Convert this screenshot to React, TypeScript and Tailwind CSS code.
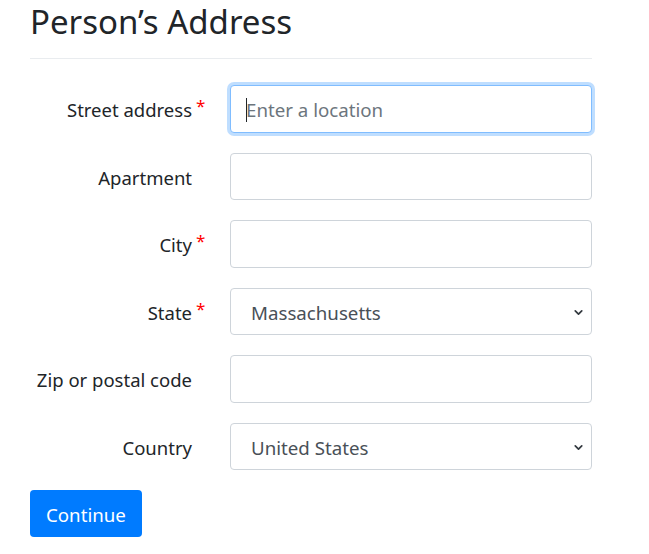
import { ChevronDown } from 'lucide-react';

const font = { fontFamily: "'Noto Sans', 'Open Sans', sans-serif" };

type Field = {
  label: string;
  required?: boolean;
  kind: 'input' | 'select';
  value?: string;
  placeholder?: string;
  focused?: boolean;
};

const fields: Field[] = [
  { label: 'Street address', required: true, kind: 'input', placeholder: 'Enter a location', focused: true },
  { label: 'Apartment', kind: 'input' },
  { label: 'City', required: true, kind: 'input' },
  { label: 'State', required: true, kind: 'select', value: 'Massachusetts' },
  { label: 'Zip or postal code', kind: 'input' },
  { label: 'Country', kind: 'select', value: 'United States' },
];

function Control({ field }: { field: Field }) {
  if (field.kind === 'select') {
    return (
      <div className="relative h-[47.5px] rounded-[4px] border border-[#ced4da] bg-white">
        <div className="flex h-full items-center pl-[20px] pt-[3px] text-[18.7px] text-[#495057]">{field.value}</div>
        <ChevronDown size={13} strokeWidth={3.2} className="absolute right-[6px] top-[17px] text-[#343a40]" />
      </div>
    );
  }
  if (field.focused) {
    return (
      <div className="relative h-[47.5px] rounded-[4px] border border-[#80bdff] bg-white shadow-[0_0_0_3px_rgba(0,123,255,0.25)]">
        <div className="flex h-full items-center pl-[15px] pt-[3px] text-[18.7px] text-[#6c757d]">{field.placeholder}</div>
        <span className="absolute left-[15px] top-[12px] h-[24px] w-px bg-[#212529]" />
      </div>
    );
  }
  return <div className="h-[47.5px] rounded-[4px] border border-[#ced4da] bg-white" />;
}

export default function App() {
  return (
    <div className="min-h-screen bg-white text-[#212529]" style={font}>
      <div className="w-[592px] pl-[30px]">
        <h1 className="pt-[1px] text-[33px] leading-[42px] font-normal">Person’s Address</h1>
        <hr className="mt-[15px] border-t border-[#e9ecef]" />
        <div className="mt-[26px] flex flex-col gap-[20px]">
          {fields.map((field) => (
            <div key={field.label} className="grid grid-cols-[170px_1fr] items-center gap-[30px]">
              <div className="pr-[8px] pt-[3px] text-right text-[18.5px]">
                <span className="relative">
                  {field.label}
                  {field.required && (
                    <span className="absolute left-full top-[-4px] ml-[4px] text-[17px] text-[#ff0000]">*</span>
                  )}
                </span>
              </div>
              <Control field={field} />
            </div>
          ))}
        </div>
        <button className="mt-[20px] h-[47px] rounded-[4px] bg-[#007bff] px-[16px] pt-[3px] text-[18.7px] text-white">
          Continue
        </button>
      </div>
    </div>
  );
}
